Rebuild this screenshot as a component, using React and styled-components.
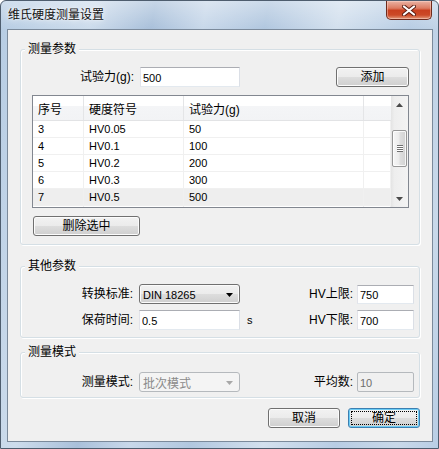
import React from 'react';
import styled, { createGlobalStyle } from 'styled-components';

// page
const GlobalStyle = createGlobalStyle`
  html, body { margin: 0; padding: 0; background: #ffffff; }
  body {
    font-family: "Liberation Sans", "Noto Sans CJK SC", sans-serif;
    font-size: 12px;
    color: #000;
  }
  * { box-sizing: border-box; }
`;

// window frame
const Window = styled.div`
  width: 439px;
  height: 449px;
  display: flex;
  flex-direction: column;
  border: 1px solid #4e5d6e;
  border-radius: 6px 6px 0 0;
  overflow: hidden;
  background:
    linear-gradient(180deg, rgba(255, 255, 255, 0.35), rgba(255, 255, 255, 0) 28px),
    linear-gradient(100deg, #b6cce3 0%, #cddcec 18%, #a9c0da 30%, #c8d8ea 40%, #b1c7df 52%,
      #d3e0ee 66%, #b8cde4 80%, #c9d9ea 92%, #b9cee5 100%);
`;

const TitleBar = styled.div`
  height: 28px;
  flex: none;
  display: flex;
  align-items: flex-start;
  padding: 0 6px 0 7px;
`;

const Caption = styled.span`
  margin-top: 6px;
  line-height: 16px;
  color: #111;
  text-shadow: 0 0 6px rgba(255, 255, 255, 0.95), 0 0 2px rgba(255, 255, 255, 0.9);
`;

const CloseButton = styled.div`
  margin-left: auto;
  width: 46px;
  height: 19px;
  border: 1px solid #6e2a1c;
  border-top: none;
  border-radius: 0 0 5px 5px;
  display: flex;
  align-items: center;
  justify-content: center;
  background: linear-gradient(180deg, #eab3a4 0%, #dc7b62 40%, #c9401f 52%, #cc4a27 78%, #e39a7b 100%);
  box-shadow: inset 0 0 0 1px rgba(255, 220, 210, 0.45);
`;

const Client = styled.div`
  margin-left: 6px;
  width: 426px;
  height: 413px;
  flex: none;
  border: 1px solid #7b8a9b;
  background: #f0f0f0;
  display: flex;
  flex-direction: column;
  padding: 19px 12px 0 12px;
`;

// group box
const Group = styled.div`
  position: relative;
  flex: none;
  margin-top: ${p => p.$top || 0}px;
  border: 1px solid #d5dfe5;
  border-radius: 3px;
  box-shadow: inset 1px 1px 0 #ffffff, 1px 1px 0 #ffffff;
  padding: ${p => p.$pad};
  display: flex;
  flex-direction: column;
  align-items: flex-start;
`;

const Legend = styled.span`
  position: absolute;
  top: -9px;
  left: 4px;
  padding: 0 3px;
  line-height: 16px;
  background: #f0f0f0;
`;

// form parts
const FormRow = styled.div`
  width: 100%;
  height: 20px;
  display: flex;
  align-items: center;
  margin-top: ${p => p.$top || 0}px;
`;

const Label = styled.span`
  flex: none;
  width: ${p => (p.$w ? `${p.$w}px` : 'auto')};
  margin-right: ${p => p.$gap ?? 6}px;
  text-align: right;
  white-space: nowrap;
  line-height: 16px;
`;

const Unit = styled.span`
  flex: 1;
  padding-left: 7px;
  font-size: 11px;
  line-height: 16px;
`;

const TextBox = styled.input`
  flex: none;
  width: ${p => p.$w}px;
  height: ${p => p.$h || 20}px;
  padding: 1px 2px 0;
  margin: 0;
  font-family: "Liberation Sans", "Noto Sans CJK SC", sans-serif;
  font-size: 11px;
  color: ${p => (p.disabled ? '#6d6d6d' : '#000')};
  background: ${p => (p.disabled ? '#f0f0f0' : '#ffffff')};
  border: 1px solid;
  border-color: ${p => (p.disabled ? '#b5b9bd' : '#abadb3 #dbdfe6 #e3e9ef #e2e3ea')};
  border-radius: ${p => (p.disabled ? 2 : 0)}px;
  outline: none;
`;

const ComboBox = styled.div`
  flex: none;
  width: ${p => p.$w}px;
  height: 20px;
  display: flex;
  align-items: center;
  padding: 1px 6px 0 3px;
  font-size: ${p => (p.$disabled ? 12 : 11)}px;
  color: ${p => (p.$disabled ? '#8a8a8a' : '#000')};
  border: 1px solid ${p => (p.$disabled ? '#b5b9bd' : '#707070')};
  border-radius: 3px;
  background: ${p =>
    p.$disabled
      ? '#f4f4f4'
      : 'linear-gradient(180deg, #f2f2f2 0%, #ebebeb 50%, #dddddd 51%, #cfcfcf 100%)'};
  box-shadow: ${p => (p.$disabled ? 'none' : 'inset 0 0 0 1px #fbfbfb')};

  & > span { flex: 1; white-space: nowrap; }
`;

const Button = styled.div`
  flex: none;
  width: ${p => p.$w}px;
  height: 20px;
  margin-left: ${p => (p.$push ? 'auto' : `${p.$left || 0}px`)};
  margin-top: ${p => p.$top || 0}px;
  display: flex;
  align-items: center;
  justify-content: center;
  line-height: 16px;
  border: 1px solid ${p => (p.$primary ? '#3c7fb1' : '#707070')};
  border-radius: 3px;
  background: linear-gradient(180deg, #f2f2f2 0%, #ebebeb 50%, #dddddd 51%, #cfcfcf 100%);
  box-shadow: inset 0 0 0 1px ${p => (p.$primary ? '#6ccdf6' : '#fcfcfc')};
  outline: ${p => (p.$primary ? '1px dotted #000' : 'none')};
  outline-offset: -4px;
`;

const ButtonRow = styled.div`
  margin-top: 10px;
  display: flex;
  justify-content: flex-end;
  gap: 8px;
`;

// list view
const columns = '51px 100px 180px 27px';

const ListView = styled.div`
  margin-top: 8px;
  width: 377px;
  height: 113px;
  flex: none;
  border: 1px solid #828790;
  background: #ffffff;
  display: flex;
`;

const Grid = styled.div`
  flex: 1;
  overflow: hidden;
  display: flex;
  flex-direction: column;
`;

const HeaderRow = styled.div`
  flex: none;
  display: grid;
  grid-template-columns: ${columns};
  height: 25px;
  border-bottom: 1px solid #e2e3e5;
  background: linear-gradient(180deg, #ffffff 0%, #ffffff 42%, #f4f5f7 43%, #f2f3f5 100%);
`;

const HeadCell = styled.div`
  display: flex;
  align-items: center;
  padding-left: 5px;
  border-right: 1px solid #e4e5e7;
  white-space: nowrap;
  &:last-child { border-right: none; }
`;

const BodyRow = styled.div`
  flex: none;
  display: grid;
  grid-template-columns: ${columns};
  height: 17px;
  border-bottom: 1px solid #f0f0f0;
  background: ${p => (p.$selected ? '#eeeeee' : '#ffffff')};
`;

const Cell = styled.div`
  display: flex;
  align-items: center;
  padding-left: 5px;
  font-size: 11px;
  border-right: 1px solid #f0f0f0;
  white-space: nowrap;
`;

const ScrollBar = styled.div`
  width: 17px;
  flex: none;
  display: flex;
  flex-direction: column;
  align-items: center;
  background: linear-gradient(90deg, #e4e4e4 0%, #eeeeee 20%, #f3f3f3 100%);
`;

const ScrollArrow = styled.div`
  width: 100%;
  height: 17px;
  flex: none;
  display: flex;
  align-items: center;
  justify-content: center;
`;

const Thumb = styled.div`
  margin-top: 17px;
  width: 15px;
  height: 37px;
  flex: none;
  border: 1px solid #979797;
  border-radius: 2px;
  background: linear-gradient(90deg, #f6f6f6 0%, #ececec 45%, #dedede 55%, #d2d2d2 100%);
  box-shadow: inset 0 0 0 1px rgba(255, 255, 255, 0.8);
  display: flex;
  align-items: center;
  justify-content: center;
`;

const Grip = styled.div`
  width: 6px;
  height: 7px;
  background: repeating-linear-gradient(180deg, #6f6f6f 0 1px, #ffffff 1px 2px);
`;

const Spacer = styled.div`
  flex: 1;
`;

const Arrow = ({ up, color = '#4a4a4a' }) => (
  <svg width="7" height="4" viewBox="0 0 7 4">
    <polygon points={up ? '3.5,0 7,4 0,4' : '0,0 7,0 3.5,4'} fill={color} />
  </svg>
);

const ComboArrow = ({ color }) => (
  <svg width="7" height="4" viewBox="0 0 7 4">
    <polygon points="0,0 7,0 3.5,4" fill={color} />
  </svg>
);

const CloseGlyph = () => (
  <svg width="14" height="11" viewBox="0 0 14 11">
    <path d="M2 1.5 L12 9.5 M12 1.5 L2 9.5" stroke="#5a1d12" strokeWidth="4" strokeLinecap="round" />
    <path d="M2 1.5 L12 9.5 M12 1.5 L2 9.5" stroke="#ffffff" strokeWidth="2.2" strokeLinecap="round" />
  </svg>
);

const rows = [
  { no: 3, sym: 'HV0.05', load: 50 },
  { no: 4, sym: 'HV0.1', load: 100 },
  { no: 5, sym: 'HV0.2', load: 200 },
  { no: 6, sym: 'HV0.3', load: 300 },
  { no: 7, sym: 'HV0.5', load: 500, selected: true },
];

export default function App() {
  return (
    <>
      <GlobalStyle />
      <Window>
        <TitleBar>
          <Caption>维氏硬度测量设置</Caption>
          <CloseButton>
            <CloseGlyph />
          </CloseButton>
        </TitleBar>

        <Client>
          <Group $pad="17px 10px 0 11px" style={{ height: 196 }}>
            <Legend>测量参数</Legend>
            <FormRow>
              <Label $w={102}>试验力(g):</Label>
              <TextBox $w={100} readOnly value="500" />
              <Button $w={73} $push>添加</Button>
            </FormRow>

            <ListView>
              <Grid>
                <HeaderRow>
                  <HeadCell>序号</HeadCell>
                  <HeadCell>硬度符号</HeadCell>
                  <HeadCell>试验力(g)</HeadCell>
                  <HeadCell />
                </HeaderRow>
                {rows.map(r => (
                  <BodyRow key={r.no} $selected={r.selected}>
                    <Cell>{r.no}</Cell>
                    <Cell>{r.sym}</Cell>
                    <Cell>{r.load}</Cell>
                    <Cell />
                  </BodyRow>
                ))}
                <BodyRow>
                  <Cell />
                  <Cell />
                  <Cell />
                  <Cell />
                </BodyRow>
              </Grid>
              <ScrollBar>
                <ScrollArrow><Arrow up /></ScrollArrow>
                <Thumb><Grip /></Thumb>
                <Spacer />
                <ScrollArrow><Arrow /></ScrollArrow>
              </ScrollBar>
            </ListView>

            <Button $w={107} $left={1} $top={8}>删除选中</Button>
          </Group>

          <Group $top={21} $pad="17px 5px 7px 11px">
            <Legend>其他参数</Legend>
            <FormRow>
              <Label $w={101}>转换标准:</Label>
              <ComboBox $w={101}>
                <span>DIN 18265</span>
                <ComboArrow color="#000" />
              </ComboBox>
              <Spacer />
              <Label $gap={4}>HV上限:</Label>
              <TextBox $w={57} $h={19} readOnly value="750" />
            </FormRow>
            <FormRow $top={6}>
              <Label $w={101}>保荷时间:</Label>
              <TextBox $w={101} readOnly value="0.5" />
              <Unit>s</Unit>
              <Label $gap={4}>HV下限:</Label>
              <TextBox $w={57} readOnly value="700" />
            </FormRow>
          </Group>

          <Group $top={14} $pad="19px 5px 5px 11px">
            <Legend>测量模式</Legend>
            <FormRow>
              <Label $w={101}>测量模式:</Label>
              <ComboBox $w={101} $disabled>
                <span>批次模式</span>
                <ComboArrow color="#a8a8a8" />
              </ComboBox>
              <Spacer />
              <Label $gap={4}>平均数:</Label>
              <TextBox $w={57} disabled value="10" readOnly />
            </FormRow>
          </Group>

          <ButtonRow>
            <Button $w={72}>取消</Button>
            <Button $w={72} $primary>确定</Button>
          </ButtonRow>
        </Client>
      </Window>
    </>
  );
}
